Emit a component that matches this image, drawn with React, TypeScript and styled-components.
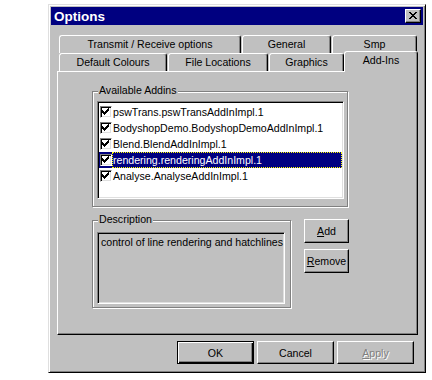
import React from 'react';
import styled, {createGlobalStyle, css} from 'styled-components';

const face = '#c0c0c0';
const light = '#dfdfdf';
const shadow = '#808080';
const navy = '#000080';

type TabData = {label: string; width: number; active?: boolean};

const backRow: TabData[] = [
    {label: 'Transmit / Receive options', width: 182},
    {label: 'General', width: 89},
    {label: 'Smp', width: 85},
];

const frontRow: TabData[] = [
    {label: 'Default Colours', width: 108},
    {label: 'File Locations', width: 100},
    {label: 'Graphics', width: 75},
    {label: 'Add-Ins', width: 74, active: true},
];

const addins = [
    'pswTrans.pswTransAddInImpl.1',
    'BodyshopDemo.BodyshopDemoAddInImpl.1',
    'Blend.BlendAddInImpl.1',
    'rendering.renderingAddInImpl.1',
    'Analyse.AnalyseAddInImpl.1',
];
const selectedIndex = 3;

const CloseGlyph = () => (
    <svg width="8" height="7" viewBox="0 0 8 7" shapeRendering="crispEdges" style={{display: 'block'}}>
        <path
            fill="#000"
            d="M0 0h2v1H0zM6 0h2v1H6zM1 1h2v1H1zM5 1h2v1H5zM2 2h4v1H2zM3 3h2v1H3zM2 4h4v1H2zM1 5h2v1H1zM5 5h2v1H5zM0 6h2v1H0zM6 6h2v1H6z"/>
    </svg>
);

const CheckGlyph = () => (
    <svg width="7" height="7" viewBox="0 0 7 7" shapeRendering="crispEdges" style={{display: 'block'}}>
        <path
            fill="#000"
            d="M6 0h1v1H6zM5 1h2v1H5zM0 2h1v1H0zM4 2h3v1H4zM0 3h2v1H0zM3 3h3v1H3zM0 4h5v1H0zM1 5h3v1H1zM2 6h1v1H2z"/>
    </svg>
);

export default function App() {
    return (
        <>
            <GlobalStyle/>
            <Window>
                <TitleBar>
                    <Title>Options</Title>
                    <CloseButton><CloseGlyph/></CloseButton>
                </TitleBar>
                <Content>
                    <Tabs>
                        <TabRow>
                            {backRow.map(t => <Tab key={t.label} $w={t.width}>{t.label}</Tab>)}
                        </TabRow>
                        <TabRow>
                            {frontRow.map(t => (
                                <Tab key={t.label} $w={t.width} $active={t.active}>{t.label}</Tab>
                            ))}
                        </TabRow>
                    </Tabs>
                    <Panel>
                        <AddinsGroup>
                            <Legend>Available Addins</Legend>
                            <ListBox>
                                {addins.map((name, i) => (
                                    <ListItem key={name} $selected={i === selectedIndex}>
                                        <CheckBox><CheckGlyph/></CheckBox>
                                        <ItemText $focus={i === selectedIndex}>{name}</ItemText>
                                    </ListItem>
                                ))}
                            </ListBox>
                        </AddinsGroup>
                        <DescRow>
                            <DescGroup>
                                <Legend>Description</Legend>
                                <DescBox>control of line rendering and hatchlines</DescBox>
                            </DescGroup>
                            <SideButtons>
                                <Button $w={45} $h={24}><u>A</u>dd</Button>
                                <Button $w={45} $h={24}><u>R</u>emove</Button>
                            </SideButtons>
                        </DescRow>
                    </Panel>
                    <Footer>
                        <Button $w={77} $h={23} $default>OK</Button>
                        <Button $w={77} $h={23}>Cancel</Button>
                        <Button $w={77} $h={23} disabled><u>A</u>pply</Button>
                    </Footer>
                </Content>
            </Window>
        </>
    );
}

const GlobalStyle = createGlobalStyle`
    html, body {
        margin: 0;
        background: #fff;
        font-family: "Liberation Sans", Arial, sans-serif;
        font-size: 10.6px;
        color: #000;
    }
`;

const Window = styled.div`
    box-sizing: border-box;
    width: 378px;
    margin: 4px 0 0 48px;
    padding: 2px;
    background: ${face};
    border: 1px solid;
    border-color: ${light} #000 #000 ${light};
    box-shadow: inset 1px 1px #fff, inset -1px -1px ${shadow};
`;

const TitleBar = styled.div`
    display: flex;
    align-items: center;
    justify-content: space-between;
    height: 18px;
    padding: 0 2px 0 3px;
    background: ${navy};
`;

const Title = styled.span`
    color: #fff;
    font-weight: bold;
    font-size: 13.5px;
`;

const CloseButton = styled.div`
    box-sizing: border-box;
    width: 16px;
    height: 14px;
    padding: 2px 0 0 3px;
    background: ${face};
    border: 1px solid;
    border-color: #fff #000 #000 #fff;
    box-shadow: inset -1px -1px ${shadow};
`;

const Content = styled.div`
    padding: 10px 5px 6px 6px;
`;

const Tabs = styled.div`
    padding-left: 2px;
`;

const TabRow = styled.div`
    display: flex;
    align-items: flex-start;
    gap: 1px;
    height: 18px;
`;

const Tab = styled.div<{$w: number; $active?: boolean}>`
    box-sizing: border-box;
    flex: none;
    width: ${p => p.$w}px;
    height: 18px;
    border: 1px solid #fff;
    border-bottom: none;
    border-right-color: #000;
    border-radius: 3px 3px 0 0;
    box-shadow: inset -1px 0 ${shadow};
    background: ${face};
    text-align: center;
    line-height: 17px;
    white-space: nowrap;

    ${p => p.$active && css`
        position: relative;
        z-index: 1;
        height: 21px;
        margin: -2px 0 -1px -1px;
        line-height: 16px;
    `}
`;

const Panel = styled.div`
    box-sizing: border-box;
    width: 361px;
    height: 264px;
    padding: 19px 0 0 34px;
    border: 1px solid;
    border-color: #fff #000 #000 #fff;
    box-shadow: inset -1px -1px ${shadow};
`;

const GroupBox = styled.div`
    position: relative;
    box-sizing: border-box;
    border: 1px solid ${shadow};
    box-shadow: inset 1px 1px #fff, 1px 1px #fff;
`;

const AddinsGroup = styled(GroupBox)`
    width: 256px;
    height: 116px;
    padding: 9px 3px 7px 4px;
`;

const DescGroup = styled(GroupBox)`
    width: 199px;
    height: 88px;
    padding: 11px 5px 3px 4px;
`;

const Legend = styled.span`
    position: absolute;
    top: -8px;
    left: 5px;
    padding: 0 1px;
    line-height: 13px;
    background: ${face};
    white-space: nowrap;
`;

const sunken = css`
    box-sizing: border-box;
    border: 1px solid;
    border-color: ${shadow} #fff #fff ${shadow};
    box-shadow: inset 1px 1px #000, inset -1px -1px ${light};
`;

const ListBox = styled.div`
    ${sunken};
    width: 247px;
    height: 98px;
    padding: 2px 1px 1px 1px;
    background: #fff;
    overflow: hidden;
`;

const ListItem = styled.div<{$selected?: boolean}>`
    display: flex;
    align-items: center;
    height: 16px;
    background: ${p => (p.$selected ? navy : 'transparent')};
    color: ${p => (p.$selected ? '#fff' : '#000')};
`;

const CheckBox = styled.span`
    ${sunken};
    flex: none;
    width: 12px;
    height: 12px;
    margin-left: 1px;
    padding: 1px 0 0 1px;
    background: #fff;
`;

const ItemText = styled.span<{$focus?: boolean}>`
    box-sizing: border-box;
    flex: 1;
    align-self: stretch;
    border: 1px dotted ${p => (p.$focus ? '#ffff00' : 'transparent')};
    line-height: 14px;
    white-space: nowrap;
`;

const DescRow = styled.div`
    display: flex;
    align-items: flex-start;
    margin-top: 13px;
`;

const DescBox = styled.div`
    ${sunken};
    width: 188px;
    height: 72px;
    padding: 1px 3px;
    line-height: 16px;
    background: ${face};
    white-space: nowrap;
`;

const SideButtons = styled.div`
    display: flex;
    flex-direction: column;
    gap: 6px;
    margin: -1px 0 0 13px;
`;

const Button = styled.button<{$w: number; $h: number; $default?: boolean}>`
    box-sizing: border-box;
    width: ${p => p.$w}px;
    height: ${p => p.$h}px;
    padding: 0;
    font: inherit;
    color: #000;
    background: ${face};
    border: 1px solid;
    border-color: #fff #000 #000 #fff;
    border-radius: 0;
    box-shadow: inset -1px -1px ${shadow};

    ${p => p.$default && css`
        border-color: #000;
        box-shadow: inset 1px 1px #fff, inset -1px -1px #000, inset -2px -2px ${shadow};
    `}

    &:disabled {
        color: ${shadow};
        text-shadow: 1px 1px #fff;
    }
`;

const Footer = styled.div`
    display: flex;
    justify-content: flex-end;
    gap: 3px;
    margin-top: 6px;
    padding-right: 4px;
`;
